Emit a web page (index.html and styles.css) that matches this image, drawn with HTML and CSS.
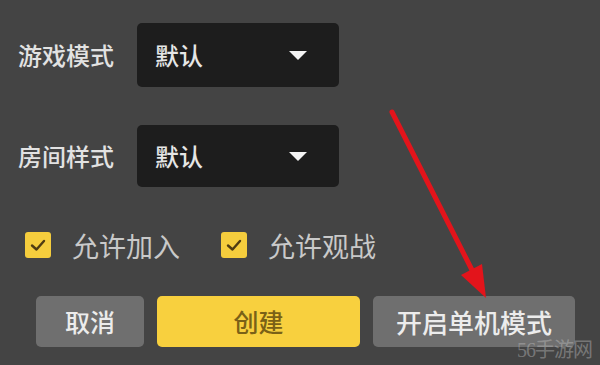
FILE: index.html
```html
<!DOCTYPE html>
<html lang="zh-CN">
<head>
<meta charset="utf-8">
<title>创建房间</title>
<link rel="stylesheet" href="styles.css">
</head>
<body>
<div class="panel">
  <div class="row">
    <span class="label">游戏模式</span>
    <div class="select"><span>默认</span><span class="caret"></span></div>
  </div>
  <div class="row">
    <span class="label">房间样式</span>
    <div class="select"><span>默认</span><span class="caret"></span></div>
  </div>
  <div class="checks">
    <label class="check"><span class="box"><svg viewBox="0 0 26 26" width="26" height="26"><path d="M7 13.5 L11.5 17.5 L19 9" fill="none" stroke="#4f3c12" stroke-width="2.4" stroke-linecap="round" stroke-linejoin="round"/></svg></span><span class="check-text">允许加入</span></label>
    <label class="check"><span class="box"><svg viewBox="0 0 26 26" width="26" height="26"><path d="M7 13.5 L11.5 17.5 L19 9" fill="none" stroke="#4f3c12" stroke-width="2.4" stroke-linecap="round" stroke-linejoin="round"/></svg></span><span class="check-text">允许观战</span></label>
  </div>
  <div class="buttons">
    <button class="btn btn-grey btn-cancel">取消</button>
    <button class="btn btn-yellow">创建</button>
    <button class="btn btn-grey btn-single">开启单机模式</button>
  </div>
</div>
<svg class="arrow" width="600" height="365" viewBox="0 0 600 365">
  <line x1="392" y1="112" x2="473" y2="272" stroke="#e3141b" stroke-width="5" stroke-linecap="round"/>
  <polygon points="486,298 482,264 461,275" fill="#e3141b"/>
</svg>
<div class="watermark">56手游网</div>
</body>
</html>
```
FILE: styles.css
```css
html, body {
  margin: 0;
  padding: 0;
}
body {
  width: 600px;
  height: 365px;
  background: #444444;
  font-family: "Noto Sans CJK SC", "Noto Sans", sans-serif;
  overflow: hidden;
  position: relative;
}
.panel {
  padding: 23px 0 0 18px;
  display: flex;
  flex-direction: column;
}
.row {
  display: flex;
  align-items: center;
  height: 64px;
  margin-bottom: 38px;
}
.row + .row {
  height: 62px;
  margin-bottom: 45px;
}
.label {
  width: 119px;
  font-size: 24px;
  font-weight: 500;
  color: #e2e2e2;
  line-height: 1;
}
.select {
  width: 202px;
  height: 100%;
  box-sizing: border-box;
  background: #1d1d1d;
  border-radius: 5px;
  display: flex;
  align-items: center;
  justify-content: space-between;
  padding: 0 32px 0 18px;
  font-size: 24px;
  font-weight: 500;
  color: #e6e6e6;
  line-height: 1;
}
.caret {
  width: 0;
  height: 0;
  border-left: 9px solid transparent;
  border-right: 9px solid transparent;
  border-top: 9px solid #f4f4f4;
}
.checks {
  display: flex;
  align-items: center;
  padding-left: 7px;
  height: 26px;
}
.check {
  display: flex;
  align-items: center;
  margin-right: 41px;
}
.box {
  width: 26px;
  height: 26px;
  background: #f5cd3d;
  border-radius: 3px;
  display: block;
}
.box svg {
  display: block;
}
.check-text {
  margin-left: 21px;
  font-size: 27px;
  color: #c9c9c9;
  line-height: 1;
}
.buttons {
  display: flex;
  gap: 13px;
  margin-top: 38px;
  padding-left: 18px;
}
.btn {
  height: 51px;
  border: none;
  border-radius: 5px;
  font-family: inherit;
  font-size: 25px;
  font-weight: 500;
  line-height: 1;
  padding: 0;
}
.btn-grey {
  background: #6f6f6f;
  color: #ececec;
}
.btn-cancel {
  width: 108px;
}
.btn-yellow {
  width: 203px;
  background: #f8d03e;
  color: #7a6117;
}
.btn-single {
  width: 202px;
  font-size: 26px;
}
.arrow {
  position: absolute;
  left: 0;
  top: 0;
  pointer-events: none;
}
.watermark {
  position: absolute;
  right: 8px;
  bottom: 2px;
  font-family: "Liberation Serif", "Noto Sans CJK SC", serif;
  font-size: 20px;
  color: rgba(200, 200, 200, 0.4);
  letter-spacing: -1px;
}
```
